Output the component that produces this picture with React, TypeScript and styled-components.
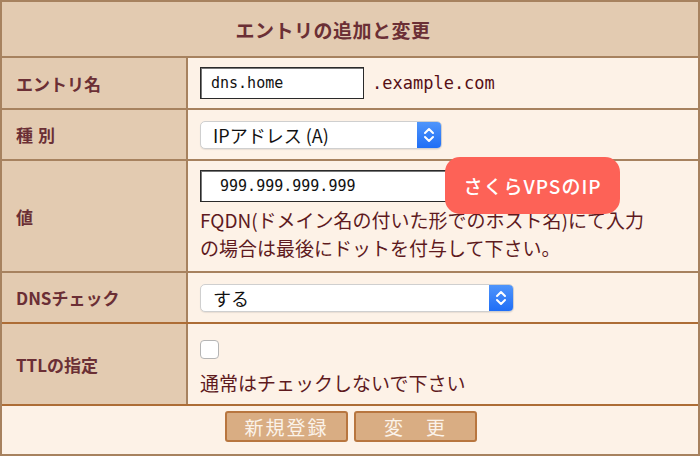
import React from 'react';
import styled, { createGlobalStyle } from 'styled-components';

const GlobalStyle = createGlobalStyle`
    html, body {
        margin: 0;
        padding: 0;
        background: #fdf2e7;
    }
    body {
        font-family: "Noto Sans CJK JP", "Noto Sans", sans-serif;
        color: #6b2f35;
    }
`;

const LINE = '#a7825f';
const STRONG_LINE = '#ad6d36';

interface RowProps {
    height: number,
    strong?: boolean,
}

const SelectArrows = () => (
    <svg width="12" height="18" viewBox="0 0 12 18">
        <path d="M2 7 L6 3 L10 7" fill="none" stroke="#fff" strokeWidth="2" strokeLinecap="round" strokeLinejoin="round" />
        <path d="M2 11 L6 15 L10 11" fill="none" stroke="#fff" strokeWidth="2" strokeLinecap="round" strokeLinejoin="round" />
    </svg>
);

const Select = (props: { label: string, width: number }) => (
    <SelectBox style={{ width: props.width }}>
        <SelectText>{props.label}</SelectText>
        <ArrowBox>
            <SelectArrows />
        </ArrowBox>
    </SelectBox>
);

export default function App() {
    return (
        <>
            <GlobalStyle />
            <Frame>
                <Header>エントリの追加と変更</Header>
                <Row height={50}>
                    <Label>エントリ名</Label>
                    <Value>
                        <InlineLine>
                            <TextBox width={164}>dns.home</TextBox>
                            <Domain>.example.com</Domain>
                        </InlineLine>
                    </Value>
                </Row>
                <Row height={49}>
                    <Label spaced>種別</Label>
                    <Value>
                        <Select label="IPアドレス (A)" width={242} />
                    </Value>
                </Row>
                <Row height={110}>
                    <Label>値</Label>
                    <Value>
                        <TextBox width={270}>&nbsp;999.999.999.999</TextBox>
                        <Note>
                            FQDN(ドメイン名の付いた形でのホスト名)にて入力<br />
                            の場合は最後にドットを付与して下さい。
                        </Note>
                        <Balloon>さくらVPSのIP</Balloon>
                    </Value>
                </Row>
                <Row height={49} strong>
                    <Label>DNSチェック</Label>
                    <Value>
                        <Select label="する" width={314} />
                    </Value>
                </Row>
                <Row height={80} strong>
                    <Label>TTLの指定</Label>
                    <Value>
                        <CheckBox />
                        <Note>通常はチェックしないで下さい</Note>
                    </Value>
                </Row>
                <Footer>
                    <Button>新規登録</Button>
                    <Button>変　更</Button>
                </Footer>
            </Frame>
        </>
    );
}

const Frame = styled.div`
    width: 700px;
    height: 456px;
    box-sizing: border-box;
    border: 2px solid ${LINE};
    background: #fdf2e7;
    display: flex;
    flex-direction: column;
`;

const Header = styled.div`
    height: 54px;
    background: #e3cbb1;
    border-bottom: 2px solid ${LINE};
    display: flex;
    align-items: center;
    justify-content: center;
    font-size: 19px;
    font-weight: bold;
    letter-spacing: 0.5px;
    padding-right: 34px;
`;

const Row = styled.div<RowProps>`
    height: ${(p) => p.height}px;
    display: grid;
    grid-template-columns: 186px 1fr;
    border-bottom: 2px solid ${(p) => (p.strong ? STRONG_LINE : LINE)};
`;

const Label = styled.div<{ spaced?: boolean }>`
    background: #e3cbb1;
    border-right: 2px solid ${LINE};
    display: flex;
    align-items: center;
    padding-left: 14px;
    font-size: 17px;
    font-weight: bold;
    letter-spacing: ${(p) => (p.spaced ? '5px' : '0')};
`;

const Value = styled.div`
    position: relative;
    display: flex;
    flex-direction: column;
    justify-content: center;
    align-items: flex-start;
    padding-left: 12px;
`;

const InlineLine = styled.div`
    display: flex;
    align-items: center;
    gap: 8px;
`;

const TextBox = styled.div<{ width: number }>`
    width: ${(p) => p.width}px;
    height: 32px;
    box-sizing: border-box;
    border: 1px solid #2a2a2a;
    box-shadow: inset 1px 1px 0 #777;
    background: #fff;
    color: #111;
    font-family: "DejaVu Sans Mono", "Liberation Mono", monospace;
    font-size: 15px;
    display: flex;
    align-items: center;
    padding-left: 10px;
    white-space: pre;
`;

const Domain = styled.span`
    font-family: "DejaVu Sans Mono", "Liberation Mono", monospace;
    font-size: 17px;
    color: #560f16;
`;

const SelectBox = styled.div`
    height: 28px;
    box-sizing: border-box;
    display: flex;
    align-items: stretch;
    background: #fff;
    border: 1px solid #cfcfcf;
    border-radius: 5px;
    overflow: hidden;
    box-shadow: 0 1px 1px rgba(0, 0, 0, 0.08);
`;

const SelectText = styled.div`
    flex: 1;
    display: flex;
    align-items: center;
    padding-left: 12px;
    font-family: "Noto Sans CJK JP", "Noto Sans", sans-serif;
    font-size: 18px;
    color: #111;
`;

const ArrowBox = styled.div`
    width: 24px;
    display: flex;
    align-items: center;
    justify-content: center;
    background: linear-gradient(#4f95fb, #1f6ef6);
`;

const Note = styled.div`
    margin-top: 4px;
    font-size: 19px;
    line-height: 28px;
    color: #5e1a1e;
`;

const CheckBox = styled.div`
    width: 19px;
    height: 19px;
    box-sizing: border-box;
    border: 1px solid #b5b5b5;
    border-radius: 4px;
    background: #fff;
    margin-top: 8px;
    margin-bottom: 6px;
`;

const Balloon = styled.div`
    position: absolute;
    left: 257px;
    top: -4px;
    width: 175px;
    height: 57px;
    border-radius: 15px;
    background: #fd6257;
    color: #fff;
    font-size: 19px;
    font-weight: 500;
    letter-spacing: 1px;
    display: flex;
    align-items: center;
    justify-content: center;
`;

const Footer = styled.div`
    flex: 1;
    display: flex;
    justify-content: center;
    align-items: flex-start;
    gap: 6px;
    padding-top: 5px;
    padding-left: 2px;
`;

const Button = styled.div`
    width: 123px;
    height: 31px;
    box-sizing: border-box;
    background: #d9ad83;
    border: 2px solid #b8763f;
    border-radius: 3px;
    color: #fbf3ea;
    font-size: 19px;
    letter-spacing: 2px;
    display: flex;
    align-items: center;
    justify-content: center;
`;
